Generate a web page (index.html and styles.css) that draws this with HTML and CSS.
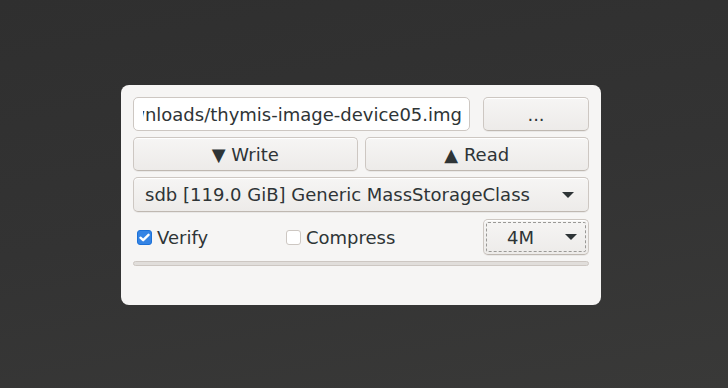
FILE: index.html
```html
<!DOCTYPE html>
<html>
<head>
<meta charset="utf-8">
<link rel="stylesheet" href="styles.css">
</head>
<body>
<div class="desk">
  <div class="win">
    <div class="row r1">
      <div class="entry"><div class="entry-clip"><span class="entry-text">/home/user/Downloads/thymis-image-device05.img</span></div></div>
      <button class="btn browse">...</button>
    </div>
    <div class="row r2">
      <button class="btn half">▼ Write</button>
      <button class="btn half">▲ Read</button>
    </div>
    <div class="row">
      <button class="btn combo"><span>sdb [119.0 GiB] Generic MassStorageClass</span><span class="arrow"></span></button>
    </div>
    <div class="row r4">
      <label class="check verify"><span class="box on"><svg width="11" height="9" viewBox="0 0 12 10"><path d="M1.5 5.2 L4.5 8 L10.5 2" fill="none" stroke="#fff" stroke-width="2.6" stroke-linecap="round" stroke-linejoin="round"/></svg></span>Verify</label>
      <label class="check comp"><span class="box"></span>Compress</label>
      <button class="btn size"><span class="sz">4M</span><span class="arrow"></span></button>
    </div>
    <div class="progress"></div>
  </div>
</div>
</body>
</html>
```
FILE: styles.css
```css
* { box-sizing: border-box; }
html, body { margin: 0; padding: 0; }
body {
  width: 728px; height: 388px; overflow: hidden;
  background: linear-gradient(170deg, #2f2f2f 0%, #333333 50%, #393938 100%);
  font-family: "DejaVu Sans", sans-serif;
  font-size: 18px;
  color: #2e3436;
}
.desk { display: flex; padding: 85px 0 0 121px; }
.win {
  width: 480px; height: 220px;
  background: #f6f5f4;
  border-radius: 8px;
  padding: 12px;
  display: flex; flex-direction: column; gap: 6px;
}
.row { display: flex; gap: 7px; }
.r1 { gap: 13px; }
.entry {
  width: 337px; height: 34px;
  background: #fff;
  border: 1px solid #cdc7c2;
  border-radius: 5px;
  display: flex; align-items: center;
  padding: 0 7px 0 9px;
}
.entry-clip {
  flex: 1; overflow: hidden; white-space: nowrap;
  display: flex; justify-content: flex-end;
}
.entry-text { display: block; flex: none; }
.btn {
  font: inherit; color: inherit;
  height: 34px;
  border: 1px solid #cdc7c2;
  border-bottom-color: #bfb8b1;
  border-radius: 5px;
  background: linear-gradient(#f6f5f4, #edebe9);
  box-shadow: inset 0 1px #fff, 0 1px rgba(0,0,0,0.05);
  padding: 0;
  display: flex; align-items: center; justify-content: center;
}
.browse { width: 106px; }
.half { flex: 1; }
.combo { flex: 1; height: 35px; justify-content: space-between; padding: 0 14px 0 11px; }
.arrow {
  width: 0; height: 0;
  border-left: 6px solid transparent; border-right: 6px solid transparent;
  border-top: 6px solid #2e3436;
}
.r4 { align-items: center; height: 36px; margin-top: 1px; gap: 0; }
.check { display: flex; align-items: center; gap: 5px; padding-left: 4px; }
.verify { width: 149px; }
.box {
  width: 15px; height: 15px;
  border: 1px solid #cdc7c2; border-radius: 3px; background: #fff;
  display: flex; align-items: center; justify-content: center;
}
.box.on { background: #3584e4; border-color: #1c71d8; }
.size {
  margin-left: auto; width: 106px; height: 36px;
  padding: 0 11px 0 23px; justify-content: space-between;
  outline: 1px dashed #9a9996; outline-offset: -4px;
}
.progress {
  height: 5px;
  border: 1px solid #cdc7c2; border-radius: 3px;
  background: #e1dedb;
}
```
